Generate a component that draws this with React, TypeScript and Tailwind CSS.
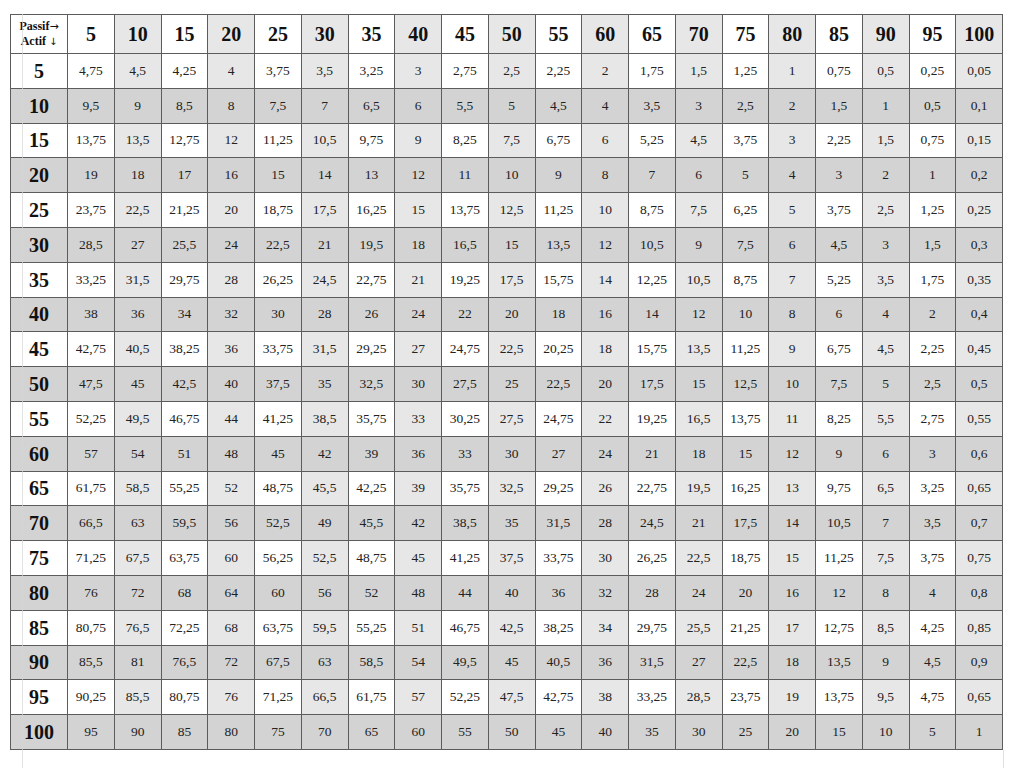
import React from "react";

const nums = Array.from({ length: 20 }, (_, i) => (i + 1) * 5);

const overrides: Record<string, string> = {
  "15-5": "13,75",
  "95-85": "13,75",
  "95-100": "0,65",
};

function val(r: number, c: number): string {
  const key = r + "-" + c;
  if (overrides[key]) return overrides[key];
  const v = c === 100 ? r / 100 : (r * (100 - c)) / 100;
  return String(v).replace(".", ",");
}

function bg(r: number | null, c: number | null): string {
  if (r !== null && (r / 5) % 2 === 0) return "bg-[#d3d3d3]";
  if (c !== null && (c / 5) % 2 === 0) return "bg-[#e7e7e7]";
  return "bg-white";
}

export default function App() {
  return (
    <div
      className="relative w-[1024px] h-[768px] bg-white overflow-hidden"
      style={{ fontFamily: '"Liberation Serif", "Times New Roman", serif' }}
    >
      <div className="pt-[14px] pl-[10px]">
        <div className="w-[993px] h-[736px] bg-[#5c5c5c] p-px grid grid-cols-[56px_repeat(20,minmax(0,1fr))] grid-rows-[38px_repeat(20,minmax(0,1fr))] gap-px">
          <div className="bg-white flex flex-col items-center justify-center text-[12px] font-bold leading-[14px] text-[#111]">
            <span>
              Passif
              <span className="font-normal text-[11px] font-['DejaVu_Sans',sans-serif]">→</span>
            </span>
            <span>
              Actif{" "}
              <span className="font-normal text-[10px] font-['DejaVu_Sans',sans-serif]">↓</span>
            </span>
          </div>
          {nums.map((c) => (
            <div
              key={"h" + c}
              className={`${bg(null, c)} flex items-center justify-center text-[20px] font-bold text-[#111]`}
            >
              {c}
            </div>
          ))}
          {nums.map((r) => (
            <React.Fragment key={"r" + r}>
              <div
                className={`${bg(r, null)} flex items-center justify-center text-[20px] font-bold text-[#111]`}
              >
                {r}
              </div>
              {nums.map((c) => (
                <div
                  key={r + "-" + c}
                  className={`${bg(r, c)} flex items-center justify-center text-[13.5px] text-[#222]`}
                >
                  {val(r, c)}
                </div>
              ))}
            </React.Fragment>
          ))}
        </div>
      </div>
      <div className="pointer-events-none absolute left-[22px] top-[14px] bottom-0 w-px bg-[#d6d6d6] opacity-70" />
      <div className="pointer-events-none absolute left-[1003px] top-[750px] bottom-0 w-px bg-[#e0e0e0]" />
    </div>
  );
}
